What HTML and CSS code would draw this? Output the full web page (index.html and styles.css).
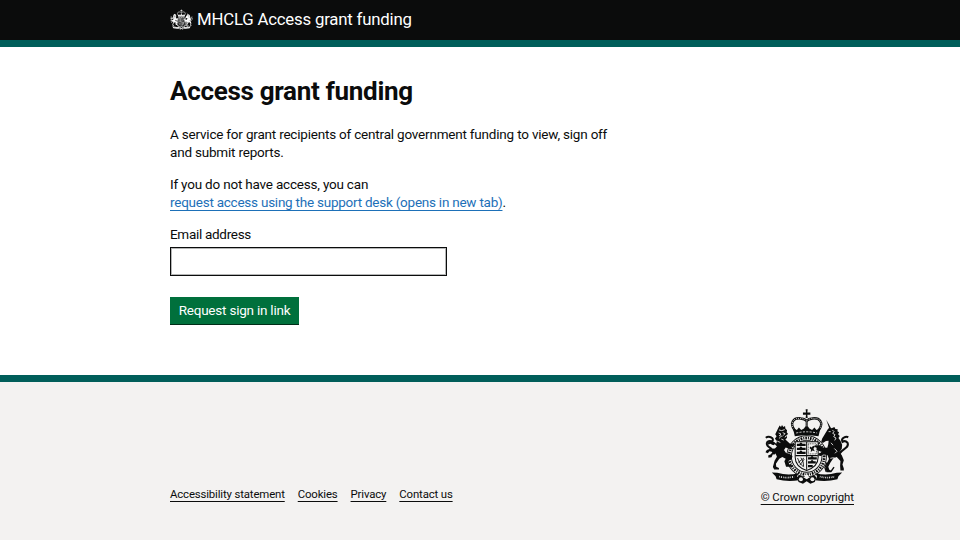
FILE: index.html
```html
<!DOCTYPE html>
<html lang="en">
<head>
    <meta charset="UTF-8">
    <meta name="viewport" content="width=device-width, initial-scale=1.0">
    <title>Access grant funding</title>
    <link rel="stylesheet" href="styles.css">
</head>
<body>
    <!-- Royal arms, shared by the header and the footer -->
    <svg class="sprite" aria-hidden="true">
        <symbol id="crest" viewBox="48 28 254 222">
            <!-- crown -->
            <path d="M171 29h6l-1 9h9v7h-9l1 10h-6l1-10h-9v-7h9z"/>
            <path d="M139 92C121 68 136 53 157 56Q168 57 174 63Q180 57 191 56C212 53 227 68 209 92" fill="none" stroke="currentColor" stroke-width="7"/>
            <path d="M139 92C121 68 136 53 157 56Q168 57 174 63Q180 57 191 56C212 53 227 68 209 92" fill="none" stroke="var(--cut)" stroke-width="2.5" stroke-dasharray="3 3"/>
            <path d="M174 62V88" fill="none" stroke="currentColor" stroke-width="6"/>
            <path d="M174 62V88" fill="none" stroke="var(--cut)" stroke-width="2" stroke-dasharray="3 3"/>
            <path d="M133 84l12 6 6-7 7 7 8-4 4-6h8l4 6 8 4 7-7 6 7 12-6-6 25q-35-6-70 0z"/>
            <path d="M143 99q31-7 62 0" fill="none" stroke="var(--cut)" stroke-width="2.5" stroke-dasharray="6 4"/>
            <!-- garter -->
            <ellipse cx="174" cy="168" rx="52" ry="54" fill="none" stroke="currentColor" stroke-width="16"/>
            <ellipse cx="174" cy="168" rx="52" ry="54" fill="none" stroke="var(--cut)" stroke-width="11"/>
            <ellipse cx="174" cy="168" rx="52" ry="54" fill="none" stroke="currentColor" stroke-width="8" stroke-dasharray="3 3 5 3"/>
            <!-- shield -->
            <path d="M140 125h68v46q0 28-34 39-34-11-34-39z" fill="var(--cut)" stroke="currentColor" stroke-width="3"/>
            <path d="M174 126v82M141 166h66" fill="none" stroke="currentColor" stroke-width="3"/>
            <path d="M145 134h9l3-3 3 3h11M145 146h9l3-3 3 3h11M145 158h9l3-3 3 3h11M178 174h9l3-3 3 3h11M178 186h9l3-3 3 3h8M178 197h14" fill="none" stroke="currentColor" stroke-width="7"/>
            <path d="M179 131h24v30h-24z" fill="none" stroke="currentColor" stroke-width="2" stroke-dasharray="3 2"/>
            <path d="M184 139l5 3 4-5 5 3-4 6 4 7-7-2-5 5 1-8-4-4z"/>
            <path d="M147 173q4 16 18 27M157 172q9 12 8 26M166 173l-17 13M154 194l13-18" fill="none" stroke="currentColor" stroke-width="2.5"/>
            <!-- lion -->
            <path d="M90 84l4-7 4 4 3-6 4 6 5-3 1 8 5 5-1 6 4 5-5 4 2 7-5 5 13 12 10 2 4 6-10 2 6 6-8 1-14-5-5 7 6 9 10 3 9 6-2 9-10 6 2 10 8 2v5h-17l-5-16 4-8-10-5-9 5-10 15 1 9 8 4v4H78l-4-7 5-19 7-12-4-9-8 2-4 9-9 1-1-6 8-4 5-7-9-2-5 6-7-3 4-7 10-3 14-1 6-6-6-7-5 3-9-4-5 3-4-6 8-4 13 2 6 5 2-8-6-7 5-7-4-6z"/>
            <path d="M92 90l8 2 9-3M91 99l7 3-5 5 9 2M103 98l7 3-6 6M92 115l5-4M110 112l3-5M87 123l9 4M99 117l7 3" fill="none" stroke="var(--cut)" stroke-width="2.5"/>
            <path d="M79 162q-6-15-16-21-11-8-5-16 7-5 14 0 5-8-2-12-9-6-17 0" fill="none" stroke="currentColor" stroke-width="6"/>
            <!-- unicorn -->
            <path d="M232 60l13 23-4 3z"/>
            <path d="M237 87l6-5 5 3 8-4 3 6 7 1-1 6 5 3-3 6 5 5-4 6 6 8 5 12-1 12-7 10 7 9 6 15-4 12 4 12v6h-10l-1-14 1-14-11-12-10 4-9 13-6 12 3 9 6 3v4h-14l-3-11 3-13 7-15-4-11-12-3-8 5-8-1 1-6 12-5-16-5-1-7-8-3 2-5 15 1 8 6 14 1 3-11 1-10-8 1-9 6-5-5 3-9z"/>
            <path d="M239 95h6M250 90l5 5-4 5 7 4-4 6 7 4-4 7M246 128l6 7M244 174q10-4 17 1l8 14M256 145l8 8-6 6" fill="none" stroke="var(--cut)" stroke-width="2.5"/>
            <path d="M268 164q8-12 19-19 12-7 8-17-7-8-15-3-4-8 4-12 8-5 13-1" fill="none" stroke="currentColor" stroke-width="6"/>
            <path d="M235 186l-7 15 4 13M255 200l-9 13" fill="none" stroke="currentColor" stroke-width="4"/>
            <!-- motto -->
            <path d="M71 216l16 1q32 9 62 1l-4 11 6 10q-34 6-66-3l-3-9z"/>
            <path d="M279 216l-16 1q-32 9-62 1l4 11-6 10q34 6 66-3l3-9z"/>
            <path d="M93 228q22 6 44 0M213 228q22 6 44 0" fill="none" stroke="var(--cut)" stroke-width="5" stroke-dasharray="2 3 3 3"/>
            <path d="M145 230q8-9 16-2l13 8 13-8q8-7 16 2l-5 14-13 5-11-7-11 7-13-5z"/>
            <circle cx="157" cy="236" r="6" fill="var(--cut)"/>
            <circle cx="174" cy="228" r="6" fill="var(--cut)"/>
            <circle cx="191" cy="236" r="6" fill="var(--cut)"/>
        </symbol>
    </svg>

    <header class="header">
        <div class="container header-inner">
            <svg class="header-crest" aria-hidden="true"><use href="#crest"/></svg>
            <span class="header-name">MHCLG Access grant funding</span>
        </div>
    </header>

    <main class="container main">
        <h1 class="heading">Access grant funding</h1>
        <p class="body-text">A service for grant recipients of central government funding to view, sign off<br>and submit reports.</p>
        <p class="body-text">If you do not have access, you can<br><a class="link" href="#">request access using the support desk (opens in new tab)</a>.</p>
        <form class="form">
            <label class="label" for="email">Email address</label>
            <input class="input" id="email" type="email">
            <button class="button" type="button">Request sign in link</button>
        </form>
    </main>

    <footer class="footer">
        <div class="container footer-inner">
            <nav class="footer-links">
                <a href="#">Accessibility statement</a>
                <a href="#">Cookies</a>
                <a href="#">Privacy</a>
                <a href="#">Contact us</a>
            </nav>
            <a class="copyright" href="#">
                <svg class="footer-crest" aria-hidden="true"><use href="#crest"/></svg>
                <span class="copyright-text">© Crown copyright</span>
            </a>
        </div>
    </footer>
</body>
</html>
```
FILE: styles.css
```css
* {
    box-sizing: border-box;
}

body {
    margin: 0;
    height: 540px;
    display: flex;
    flex-direction: column;
    overflow: hidden;
    background: #fff;
    color: #0b0c0c;
    font-family: Roboto, "Noto Sans", Arial, sans-serif;
    font-size: 13.5px;
    line-height: 17.8px;
    letter-spacing: -0.2px;
}

.sprite {
    position: absolute;
    width: 0;
    height: 0;
}

symbol {
    fill: currentColor;
}

.container {
    width: 684px;
    margin-left: 170px;
}

.header {
    height: 47.3px;
    background: #0b0c0c;
    border-bottom: 7px solid #005e5a;
    color: #fff;
}

.header-inner {
    display: flex;
    align-items: center;
    gap: 4px;
    height: 38px;
}

.header-crest {
    --cut: #0b0c0c;
    width: 23px;
    height: 23px;
}

.header-name {
    padding-top: 2px;
    font-size: 16.8px;
    white-space: nowrap;
}

.main {
    flex: 1;
    padding-top: 27px;
}

.heading {
    margin: 0 0 18px;
    font-size: 26px;
    line-height: 34px;
    font-weight: 700;
    letter-spacing: -0.3px;
}

.body-text {
    margin: 0 0 14.2px;
    white-space: nowrap;
}

.link {
    color: #1d70b8;
    letter-spacing: -0.24px;
    text-decoration-thickness: 1px;
    text-underline-offset: 3px;
}

.form {
    display: flex;
    flex-direction: column;
    align-items: flex-start;
}

.label {
    margin-bottom: 3px;
    letter-spacing: -0.3px;
}

.input {
    width: 277px;
    height: 29px;
    border: 1px solid #0b0c0c;
    border-radius: 0;
    box-shadow: inset 0 0 0 1px rgba(11, 12, 12, 0.3);
}

.button {
    width: 129px;
    height: 27px;
    margin-top: 21px;
    padding: 1px 0 0;
    border: 0;
    background: #00703c;
    box-shadow: 0 1px 0 #002d18;
    color: #fff;
    font: inherit;
    letter-spacing: -0.22px;
    white-space: nowrap;
}

.footer {
    height: 165px;
    border-top: 7px solid #005e5a;
    background: #f3f2f1;
    font-size: 11.4px;
    line-height: 14px;
    letter-spacing: -0.15px;
}

.footer-inner {
    display: flex;
    justify-content: space-between;
    align-items: flex-end;
    height: 122px;
}

.footer a {
    color: #0b0c0c;
    text-decoration-thickness: 1px;
    text-underline-offset: 3px;
    white-space: nowrap;
}

.footer-links {
    display: flex;
    gap: 13px;
    margin-bottom: 3px;
}

.copyright {
    display: flex;
    flex-direction: column;
    align-items: center;
    gap: 6px;
}

.copyright-text {
    letter-spacing: -0.06px;
}

.footer-crest {
    --cut: #f3f2f1;
    width: 86px;
    height: 75px;
}
```
